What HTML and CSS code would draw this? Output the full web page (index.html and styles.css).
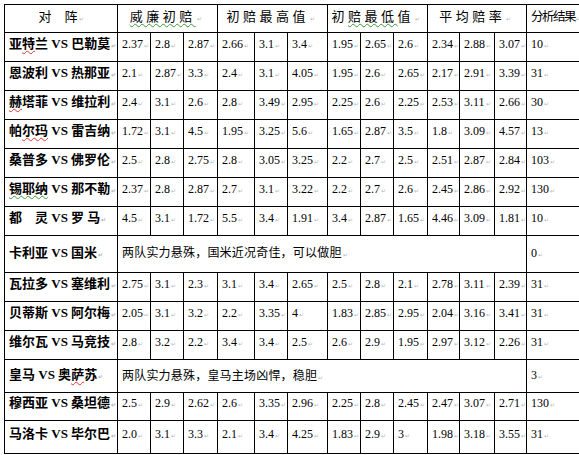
FILE: index.html
```html
<!DOCTYPE html>
<html>
<head>
<meta charset="utf-8">
<link rel="stylesheet" href="styles.css">
</head>
<body>
<table class="odds">
<colgroup>
<col class="c-team"><col class="w33"><col class="w33"><col class="w34"><col class="w37"><col class="w33"><col class="w40"><col class="w33"><col class="w33"><col class="w34"><col class="w32"><col class="w35"><col class="w32"><col class="w54">
</colgroup>
<tr class="head">
<th class="h-team">对　阵</th>
<th colspan="3"><span class="gw">威廉初赔</span></th>
<th colspan="3">初赔最高值</th>
<th colspan="3">初<span class="gw">赔最低</span>值</th>
<th colspan="3">平均赔率</th>
<th class="h-res">分析结果</th>
</tr>
<tr><td class="team">亚<span class="rw">特</span>兰 VS 巴勒莫</td><td>2.37</td><td>2.8</td><td>2.87</td><td>2.66</td><td>3.1</td><td>3.4</td><td>1.95</td><td>2.65</td><td>2.6</td><td>2.34</td><td>2.88</td><td>3.07</td><td>10</td></tr>
<tr><td class="team">恩波利 VS 热那亚</td><td>2.1</td><td>2.87</td><td>3.3</td><td>2.4</td><td>3.1</td><td>4.05</td><td>1.95</td><td>2.6</td><td>2.65</td><td>2.17</td><td>2.91</td><td>3.39</td><td>31</td></tr>
<tr><td class="team"><span class="rw">赫</span>塔菲 VS 维拉利</td><td>2.4</td><td>3.1</td><td>2.6</td><td>2.8</td><td>3.49</td><td>2.95</td><td>2.25</td><td>2.6</td><td>2.25</td><td>2.53</td><td>3.11</td><td>2.66</td><td>30</td></tr>
<tr><td class="team">帕<span class="rw">尔玛</span> VS 雷吉纳</td><td>1.72</td><td>3.1</td><td>4.5</td><td>1.95</td><td>3.25</td><td>5.6</td><td>1.65</td><td>2.87</td><td>3.5</td><td>1.8</td><td>3.09</td><td>4.57</td><td>13</td></tr>
<tr><td class="team">桑普多 VS 佛罗伦</td><td>2.5</td><td>2.8</td><td>2.75</td><td>2.8</td><td>3.05</td><td>3.25</td><td>2.2</td><td>2.7</td><td>2.5</td><td>2.51</td><td>2.87</td><td>2.84</td><td>103</td></tr>
<tr><td class="team"><span class="gw">锡耶纳</span> VS 那不勒</td><td>2.37</td><td>2.8</td><td>2.87</td><td>2.7</td><td>3.1</td><td>3.22</td><td>2.2</td><td>2.7</td><td>2.6</td><td>2.45</td><td>2.86</td><td>2.92</td><td>130</td></tr>
<tr><td class="team">都　灵 VS 罗 马</td><td>4.5</td><td>3.1</td><td>1.72</td><td>5.5</td><td>3.4</td><td>1.91</td><td>3.4</td><td>2.87</td><td>1.65</td><td>4.46</td><td>3.09</td><td>1.81</td><td>10</td></tr>
<tr class="tall1"><td class="team">卡利亚 VS 国米</td><td class="note" colspan="12">两队实力悬殊，国米近况奇佳，可以做胆</td><td>0</td></tr>
<tr><td class="team">瓦拉多 VS 塞维利</td><td>2.75</td><td>3.1</td><td>2.3</td><td>3.1</td><td>3.4</td><td>2.65</td><td>2.5</td><td>2.8</td><td>2.1</td><td>2.78</td><td>3.11</td><td>2.39</td><td>31</td></tr>
<tr><td class="team">贝蒂斯 VS 阿尔梅</td><td>2.05</td><td>3.1</td><td>3.2</td><td>2.2</td><td>3.35</td><td>4</td><td>1.83</td><td>2.85</td><td>2.95</td><td>2.04</td><td>3.16</td><td>3.41</td><td>31</td></tr>
<tr><td class="team">维尔瓦 VS 马竞技</td><td>2.8</td><td>3.2</td><td>2.2</td><td>3.4</td><td>3.4</td><td>2.5</td><td>2.6</td><td>2.9</td><td>1.95</td><td>2.97</td><td>3.12</td><td>2.26</td><td>31</td></tr>
<tr class="tall2"><td class="team">皇马 VS 奥<span class="rw">萨</span>苏</td><td class="note" colspan="12">两队实力悬殊，皇马主场凶悍，稳胆</td><td>3</td></tr>
<tr class="short"><td class="team">穆西亚 VS 桑坦德</td><td>2.5</td><td>2.9</td><td>2.62</td><td>2.6</td><td>3.35</td><td>2.96</td><td>2.25</td><td>2.8</td><td>2.45</td><td>2.47</td><td>3.07</td><td>2.71</td><td>130</td></tr>
<tr class="last"><td class="team">马洛卡 VS 毕尔巴</td><td>2.0</td><td>3.1</td><td>3.3</td><td>2.1</td><td>3.4</td><td>4.25</td><td>1.83</td><td>2.9</td><td>3</td><td>1.98</td><td>3.18</td><td>3.55</td><td>31</td></tr>
</table>
</body>
</html>
```
FILE: styles.css
```css
html, body {
  margin: 0;
  padding: 0;
  background: #fff;
  overflow: hidden;
}
body {
  width: 579px;
  height: 455px;
}
.odds {
  margin: 4px 0 0 4px;
  border-collapse: collapse;
  table-layout: fixed;
  width: 577px;
  font-family: "Liberation Serif", "Noto Sans CJK SC", serif;
  font-size: 12px;
  color: #000;
}
.c-team { width: 113px; }
.w32 { width: 32px; }
.w33 { width: 33px; }
.w34 { width: 34px; }
.w35 { width: 35px; }
.w37 { width: 37px; }
.w40 { width: 40px; }
.w54 { width: 54px; }
th, td {
  border: 1px solid #000;
  padding: 0 0 5px 4px;
  white-space: nowrap;
  overflow: hidden;
  text-align: left;
  vertical-align: middle;
  line-height: 14px;
}
td::after, th::after {
  content: "\21B5";
  font-size: 6px;
  color: #b8b8b8;
  margin-left: 1px;
}
tr { height: 29px; }
tr.head { height: 28px; }
tr.tall1 { height: 37px; }
tr.tall1 td { padding-bottom: 1px; }
tr.tall2 { height: 33px; }
tr.tall2 td { padding-bottom: 0; }
tr.short { height: 28px; }
tr.last { height: 33px; }
th {
  font-family: "Noto Sans CJK SC", sans-serif;
  font-weight: normal;
  font-size: 13px;
  letter-spacing: 3.5px;
  text-align: center;
  padding: 0 0 2px 0;
}
th.h-team { letter-spacing: 0; }
th.h-res {
  letter-spacing: -1.5px;
  text-align: left;
  padding-left: 4px;
  font-size: 12.5px;
}
.team {
  font-family: "Liberation Serif", "Noto Sans CJK SC", serif;
  font-weight: bold;
  font-size: 13px;
  padding-left: 4px;
}
.note {
  font-family: "Noto Sans CJK SC", sans-serif;
  font-size: 12px;
  letter-spacing: 0.2px;
}
.rw {
  text-decoration: underline wavy #e03030;
  text-decoration-thickness: 1px;
  text-underline-offset: 2px;
}
.gw {
  text-decoration: underline wavy #3a9a3a;
  text-decoration-thickness: 1px;
  text-underline-offset: 2px;
}
```
